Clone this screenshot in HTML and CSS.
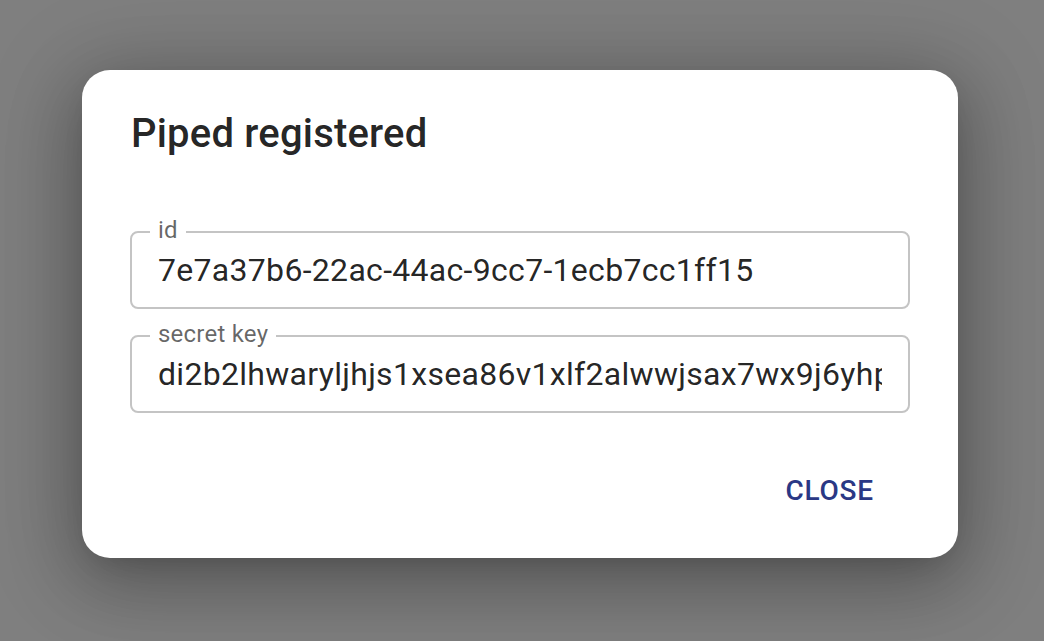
FILE: index.html
```html
<!DOCTYPE html>
<html>
<head>
<meta charset="utf-8">
<title>Piped registered</title>
<link rel="stylesheet" href="styles.css">
</head>
<body>
<div class="backdrop">
  <div class="dialog" role="dialog">
    <h2 class="dialog-title">Piped registered</h2>
    <div class="dialog-content">
      <div class="field">
        <span class="field-label">id</span>
        <div class="field-input">7e7a37b6-22ac-44ac-9cc7-1ecb7cc1ff15</div>
      </div>
      <div class="field">
        <span class="field-label">secret key</span>
        <div class="field-input">di2b2lhwaryljhjs1xsea86v1xlf2alwwjsax7wx9j6yhpq3k0r8z</div>
      </div>
    </div>
    <div class="dialog-actions">
      <button class="btn-text">CLOSE</button>
    </div>
  </div>
</div>
</body>
</html>
```

FILE: styles.css
```css
html, body {
  margin: 0;
  padding: 0;
  height: 100%;
}
body {
  font-family: Roboto, "Noto Sans", sans-serif;
  background: #7f7f7f;
}
.backdrop {
  height: 100%;
  display: flex;
  align-items: flex-start;
  justify-content: flex-start;
  padding: 70px 0 0 82px;
  box-sizing: border-box;
}
.dialog {
  width: 876px;
  height: 488px;
  box-sizing: border-box;
  background: #fff;
  border-radius: 28px;
  box-shadow: 0 22px 70px 6px rgba(0,0,0,0.22), 0 9px 92px 16px rgba(0,0,0,0.14), 0 11px 30px -14px rgba(0,0,0,0.2);
  display: flex;
  flex-direction: column;
}
.dialog-title {
  margin: 0;
  padding: 32px 48px 0 49px;
  font-size: 40px;
  font-weight: 500;
  line-height: 64px;
  color: rgba(0,0,0,0.87);
  letter-spacing: 0.005em;
}
.dialog-content {
  padding: 65px 48px 0 48px;
  display: flex;
  flex-direction: column;
  gap: 26px;
}
.field {
  position: relative;
  height: 78px;
  box-sizing: border-box;
  border: 2px solid #c4c4c4;
  border-radius: 8px;
  display: flex;
  align-items: center;
  padding: 0 26px;
}
.field-label {
  position: absolute;
  top: -16px;
  left: 18px;
  padding: 0 8px;
  background: #fff;
  font-size: 24px;
  line-height: 26px;
  letter-spacing: 0.00938em;
  color: rgba(0,0,0,0.6);
}
.field-input {
  font-size: 32px;
  line-height: 40px;
  letter-spacing: 0.00938em;
  color: rgba(0,0,0,0.87);
  white-space: nowrap;
  overflow: hidden;
  width: 100%;
}
.dialog-actions {
  margin-top: auto;
  display: flex;
  justify-content: flex-end;
  padding: 0 68px 47px 0;
}
.btn-text {
  background: none;
  border: none;
  padding: 0 16px;
  font-family: Roboto, sans-serif;
  font-size: 28px;
  font-weight: 500;
  letter-spacing: 0.02857em;
  color: #2a3885;
  line-height: 40px;
}
```
